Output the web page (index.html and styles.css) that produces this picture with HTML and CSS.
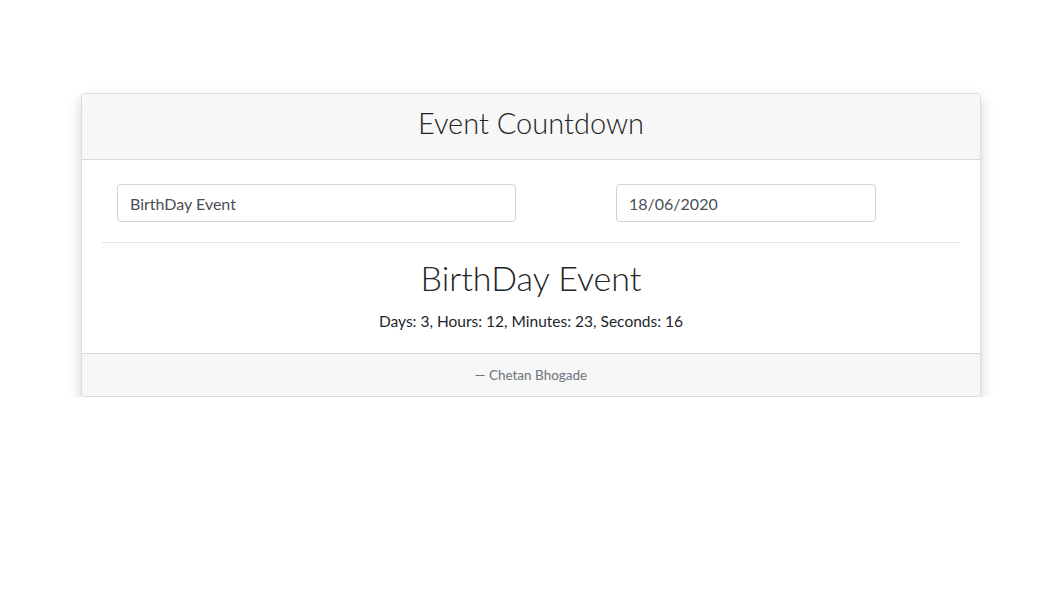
FILE: index.html
```html
<!DOCTYPE html>
<html>
<head>
<meta charset="utf-8">
<link rel="stylesheet" href="styles.css">
</head>
<body>
<div class="card">
  <div class="card-header">Event Countdown</div>
  <div class="card-body">
    <div class="inputs">
      <div class="field name">BirthDay Event</div>
      <div class="field date">18/06/2020</div>
    </div>
    <hr class="divider">
    <h2 class="event-title">BirthDay Event</h2>
    <p class="countdown">Days: 3, Hours: 12, Minutes: 23, Seconds: 16</p>
  </div>
  <div class="card-footer">— Chetan Bhogade</div>
</div>
</body>
</html>
```
FILE: styles.css
```css
html, body {
  margin: 0;
  padding: 0;
  background: #fff;
}
body {
  font-family: "Source Sans Pro", Lato, "Liberation Sans", sans-serif;
  color: #212529;
  padding-top: 93px;
}
.card {
  width: 898px;
  margin: 0 auto;
  border: 1px solid #dcdcdc;
  border-radius: 4px;
  box-shadow: 0 6px 14px rgba(0,0,0,0.18);
  background: #fff;
  transform: translateX(-1px);
}
.card-header {
  background: #f7f7f7;
  border-bottom: 1px solid #d8d8d8;
  height: 66px;
  box-sizing: border-box;
  padding-bottom: 9px;
  display: flex;
  align-items: center;
  justify-content: center;
  font-size: 29px;
  font-weight: 300;
  color: #212529;
  border-radius: 4px 4px 0 0;
}
.card-body {
  padding: 24px 20px 0;
}
.inputs {
  display: flex;
  padding: 0 15px;
}
.field {
  height: 38px;
  box-sizing: border-box;
  border: 1px solid #ced4da;
  border-radius: 4px;
  padding: 0 12px;
  display: flex;
  align-items: center;
  font-size: 16px;
  color: #495057;
}
.name {
  width: 399px;
}
.date {
  width: 260px;
  margin-left: 100px;
}
.divider {
  border: 0;
  border-top: 1px solid #e5e5e5;
  margin: 20px 0 0;
}
.event-title {
  margin: 13px 0 0;
  text-align: center;
  font-size: 34px;
  font-weight: 300;
  line-height: 43px;
}
.countdown {
  margin: 10px 0 0;
  padding-bottom: 20px;
  text-align: center;
  font-size: 15.5px;
  line-height: 24px;
}
.card-footer {
  background: #f7f7f7;
  border-top: 1px solid #d8d8d8;
  height: 43px;
  box-sizing: border-box;
  display: flex;
  align-items: center;
  justify-content: center;
  font-size: 13.5px;
  color: #6c757d;
  border-radius: 0 0 4px 4px;
}
```
